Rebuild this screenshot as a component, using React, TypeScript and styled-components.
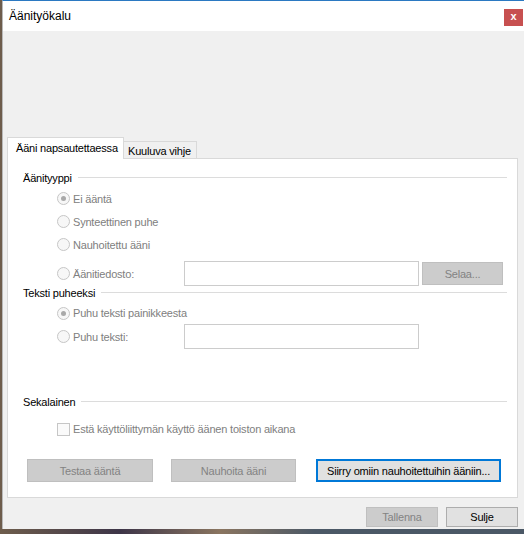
import styled, { createGlobalStyle } from 'styled-components'

const GlobalStyle = createGlobalStyle`
  html, body {
    margin: 0;
    padding: 0;
    width: 524px;
    height: 534px;
    overflow: hidden;
  }
  body {
    background: linear-gradient(90deg, #6e5d4c 0px, #3d3548 120px, #8a7560 220px, #4b5866 315px, #4b5866 100%);
    font-family: 'Liberation Sans', Arial, sans-serif;
    font-size: 11px;
    letter-spacing: -0.2px;
  }
`

const Page = styled.div`
  display: flex;
  flex-direction: column;
  width: 524px;
  height: 534px;
`

const Window = styled.div`
  margin-left: 2px;
  height: 529px;
  display: flex;
  flex-direction: column;
  background: #f0f0f0;
  border-top: 1px solid #2b79c2;
  border-left: 1px solid #b9b9b9;
  box-sizing: border-box;
`

const TitleBar = styled.div`
  height: 30px;
  flex: none;
  display: flex;
  align-items: center;
  justify-content: space-between;
  background: #ffffff;
  padding-left: 6px;
`

const Title = styled.span`
  font-size: 12px;
  letter-spacing: 0;
  color: #000;
`

const CloseButton = styled.div`
  width: 19px;
  height: 17px;
  margin: 2px 1px 0 0;
  background: #c75050;
  color: #fff;
  font-size: 11px;
  font-weight: bold;
  display: flex;
  align-items: center;
  justify-content: center;
  padding-bottom: 2px;
  box-sizing: border-box;
`

const Body = styled.div`
  flex: 1;
  display: flex;
  flex-direction: column;
  padding: 106px 6px 0 4px;
`

const TabStrip = styled.div`
  display: flex;
  align-items: flex-end;
  margin-bottom: -1px;
  position: relative;
  z-index: 1;
`

const Tab = styled.div<{ $active?: boolean }>`
  box-sizing: border-box;
  display: flex;
  align-items: center;
  color: #000;
  border: 1px solid #d9d9d9;
  ${(p) =>
    p.$active
      ? `
    height: 22px;
    width: 117px;
    padding: 0 0 2px 8px;
    background: #ffffff;
    border-bottom: none;
  `
      : `
    height: 18px;
    width: 73px;
    padding: 1px 0 0 4px;
    background: #f0f0f0;
    border-left: none;
  `}
`

const Panel = styled.div`
  box-sizing: border-box;
  height: 340px;
  background: #ffffff;
  border: 1px solid #d9d9d9;
  padding: 12px 10px 0 15px;
  display: flex;
  flex-direction: column;
`

const GroupHeader = styled.div<{ $gap?: number }>`
  display: flex;
  align-items: center;
  height: 14px;
  margin-top: ${(p) => p.$gap ?? 0}px;
  color: #000;
  gap: 6px;
  &::after {
    content: '';
    flex: 1;
    height: 1px;
    background: #dcdcdc;
    margin-top: -1px;
  }
`

const OptionRow = styled.div<{ $height?: number; $gap?: number }>`
  display: flex;
  align-items: center;
  height: ${(p) => p.$height ?? 23}px;
  margin-top: ${(p) => p.$gap ?? 0}px;
  padding-left: 34px;
`

const OptionLabel = styled.label<{ $width?: number }>`
  display: flex;
  align-items: center;
  gap: 3px;
  color: #808080;
  width: ${(p) => (p.$width ? `${p.$width}px` : 'auto')};
  flex: none;
`

const Radio = styled.span<{ $checked?: boolean }>`
  width: 13px;
  height: 13px;
  box-sizing: border-box;
  border-radius: 50%;
  border: 1px solid #c6c6c6;
  background: #f7f7f7;
  display: flex;
  align-items: center;
  justify-content: center;
  &::after {
    content: '';
    width: 5px;
    height: 5px;
    border-radius: 50%;
    background: ${(p) => (p.$checked ? '#a9a9a9' : 'transparent')};
  }
`

const Checkbox = styled.span`
  width: 13px;
  height: 13px;
  box-sizing: border-box;
  border: 1px solid #c6c6c6;
  background: #fafafa;
`

const TextBox = styled.div<{ $width: number }>`
  width: ${(p) => p.$width}px;
  height: 25px;
  box-sizing: border-box;
  border: 1px solid #cccccc;
  background: #ffffff;
  flex: none;
`

const Button = styled.div<{ $width: number; $height?: number; $variant?: 'disabled' | 'default' | 'focus' }>`
  width: ${(p) => p.$width}px;
  height: ${(p) => p.$height ?? 23}px;
  box-sizing: border-box;
  display: flex;
  align-items: center;
  justify-content: center;
  flex: none;
  ${(p) =>
    p.$variant === 'disabled'
      ? `background: #cccccc; border: 1px solid #bfbfbf; color: #838383;`
      : p.$variant === 'focus'
        ? `background: #e1e1e1; border: 2px solid #0078d7; color: #000;`
        : `background: #e1e1e1; border: 1px solid #adadad; color: #000;`}
`

const BrowseButton = styled(Button)`
  margin-left: 3px;
`

const RecordingsButton = styled(Button)`
  margin-left: 2px;
`

const ButtonRow = styled.div`
  display: flex;
  align-items: center;
  margin-top: 19px;
  padding-left: 4px;
  gap: 18px;
`

const Footer = styled.div`
  display: flex;
  justify-content: flex-end;
  gap: 8px;
  margin-top: 9px;
`

const App = () => {
  return (
    <>
      <GlobalStyle />
      <Page>
        <Window>
          <TitleBar>
            <Title>Äänityökalu</Title>
            <CloseButton>x</CloseButton>
          </TitleBar>
          <Body>
            <TabStrip>
              <Tab $active>Ääni napsautettaessa</Tab>
              <Tab>Kuuluva vihje</Tab>
            </TabStrip>
            <Panel>
              <GroupHeader>Äänityyppi</GroupHeader>
              <OptionRow $gap={2}>
                <OptionLabel>
                  <Radio $checked />
                  Ei ääntä
                </OptionLabel>
              </OptionRow>
              <OptionRow>
                <OptionLabel>
                  <Radio />
                  Synteettinen puhe
                </OptionLabel>
              </OptionRow>
              <OptionRow>
                <OptionLabel>
                  <Radio />
                  Nauhoitettu ääni
                </OptionLabel>
              </OptionRow>
              <OptionRow $height={25} $gap={5}>
                <OptionLabel $width={127}>
                  <Radio />
                  Äänitiedosto:
                </OptionLabel>
                <TextBox $width={235} />
                <BrowseButton $width={81} $variant="disabled">
                  Selaa...
                </BrowseButton>
              </OptionRow>
              <GroupHeader>Teksti puheeksi</GroupHeader>
              <OptionRow $height={22} $gap={2}>
                <OptionLabel>
                  <Radio $checked />
                  Puhu teksti painikkeesta
                </OptionLabel>
              </OptionRow>
              <OptionRow $height={25}>
                <OptionLabel $width={127}>
                  <Radio />
                  Puhu teksti:
                </OptionLabel>
                <TextBox $width={235} />
              </OptionRow>
              <GroupHeader $gap={46}>Sekalainen</GroupHeader>
              <OptionRow $height={22} $gap={9}>
                <OptionLabel>
                  <Checkbox />
                  Estä käyttöliittymän käyttö äänen toiston aikana
                </OptionLabel>
              </OptionRow>
              <ButtonRow>
                <Button $width={126} $variant="disabled">
                  Testaa ääntä
                </Button>
                <Button $width={125} $variant="disabled">
                  Nauhoita ääni
                </Button>
                <RecordingsButton $width={185} $variant="focus">
                  Siirry omiin nauhoitettuihin ääniin...
                </RecordingsButton>
              </ButtonRow>
            </Panel>
            <Footer>
              <Button $width={72} $height={20} $variant="disabled">
                Tallenna
              </Button>
              <Button $width={72} $height={20}>
                Sulje
              </Button>
            </Footer>
          </Body>
        </Window>
      </Page>
    </>
  )
}

export default App
